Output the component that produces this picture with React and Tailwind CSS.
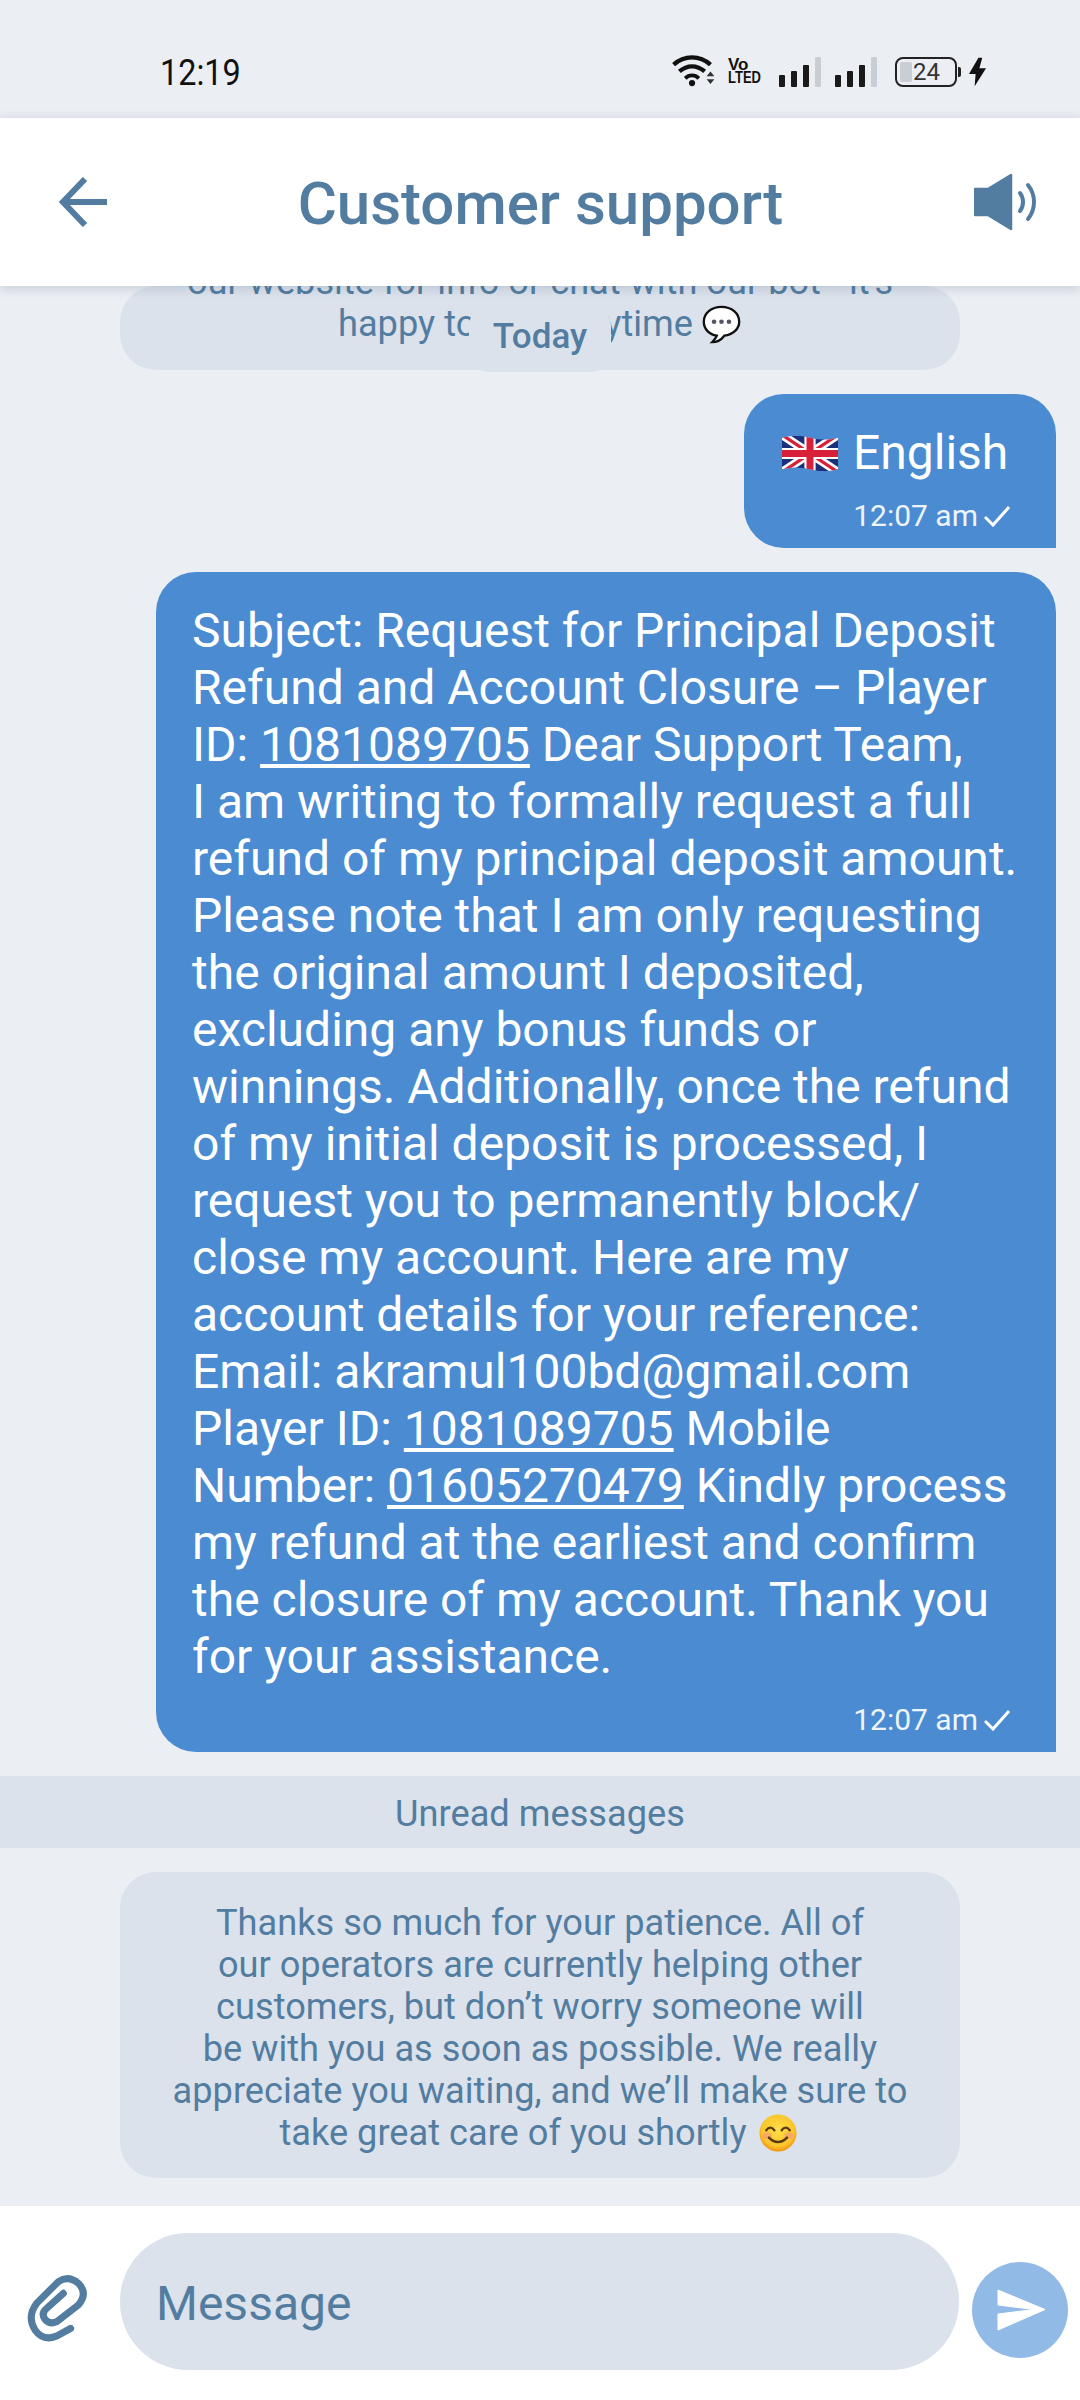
const ROBOTO = "font-['Roboto',sans-serif]";

function Flag({ className }) {
  return (
    <svg viewBox="0 0 60 40" className={className}>
      <clipPath id="f"><path d="M0 3 Q15 -1 30 3 T60 3 V37 Q45 41 30 37 T0 37Z" /></clipPath>
      <g clipPath="url(#f)">
        <rect width="60" height="40" fill="#1b2f7a" />
        <path d="M0 0L60 40M60 0L0 40" stroke="#fff" strokeWidth="9" />
        <path d="M0 0L60 40M60 0L0 40" stroke="#d8203a" strokeWidth="3.5" />
        <path d="M30 0V40M0 20H60" stroke="#fff" strokeWidth="12" />
        <path d="M30 0V40M0 20H60" stroke="#d8203a" strokeWidth="7.5" />
      </g>
    </svg>
  );
}

function Check() {
  return (
    <svg viewBox="0 0 26 22" className="w-[26px] h-[22px]" fill="none" stroke="#fff" strokeWidth="3">
      <path d="M1 12l8 8L25 2" />
    </svg>
  );
}

function Stamp() {
  return (
    <div className="flex items-center justify-end gap-[6px] pr-[2px] text-[30px] leading-[34px] text-[#eef4fb]">
      <span>12:07 am</span>
      <Check />
    </div>
  );
}

function Signal() {
  return (
    <div className="flex items-end gap-[6px] h-[30px]">
      <div className="w-[6px] h-[12px] rounded-[1px] bg-[#1a1a1a]" />
      <div className="w-[6px] h-[16px] rounded-[1px] bg-[#1a1a1a]" />
      <div className="w-[6px] h-[22px] rounded-[1px] bg-[#1a1a1a]" />
      <div className="w-[6px] h-[30px] rounded-[1px] bg-[#c9ced4]" />
    </div>
  );
}

function StatusBar() {
  return (
    <div className="h-[118px] flex items-start justify-between pl-[160px] pr-[93px] pt-[51px] bg-[#ebeef3]">
      <span className="text-[36px] leading-[44px] text-[#111] font-['Roboto',sans-serif] scale-x-[0.9] origin-left">12:19</span>
      <div className="flex items-end h-[32px] mt-[4px]">
        <svg viewBox="0 0 46 34" className="w-[46px] h-[33px]">
          <path d="M3 11C14 1 30 1 41 11" fill="none" stroke="#111" strokeWidth="4.5" />
          <path d="M9 18C17 11 27 11 35 18" fill="none" stroke="#111" strokeWidth="4.5" />
          <path d="M15 25C19 21 25 21 29 25" fill="none" stroke="#111" strokeWidth="4" />
          <circle cx="22" cy="30" r="3.2" fill="#111" />
          <path d="M37 23l4-5 4 5zM37 26l4 5 4-5z" fill="#333" />
        </svg>
        <div className="ml-[12px] w-[35px] text-[#111] font-['Liberation_Sans',sans-serif] font-bold">
          <div className="text-[17px] leading-[16px]">Vo</div>
          <div className="text-[13px] leading-[14px] scale-y-125 origin-bottom whitespace-nowrap">LTED</div>
        </div>
        <div className="ml-[16px]"><Signal /></div>
        <div className="ml-[14px]"><Signal /></div>
        <div className="ml-[18px] relative w-[62px] h-[30px] rounded-[8px] border-[2px] border-[#222] flex items-center overflow-hidden">
          <div className="absolute left-[3px] top-[3px] bottom-[3px] w-[12px] bg-[#c9ced4] rounded-[2px]" />
          <span className="relative ml-[16px] text-[24px] leading-[26px] text-[#333] font-['Roboto',sans-serif]">24</span>
        </div>
        <div className="w-[3px] h-[10px] bg-[#222] ml-[1px] mr-[7px] mb-[10px] rounded-r-[2px]" />
        <svg viewBox="0 0 20 30" className="w-[19px] h-[30px]">
          <path d="M11 0L1 17h7L7 30l12-19h-7l3-11z" fill="#111" />
        </svg>
      </div>
    </div>
  );
}

function Header() {
  return (
    <div className="relative z-10 h-[168px] bg-white flex items-center justify-between pl-[59px] pr-[42px] shadow-[0_2px_10px_rgba(60,80,110,0.22)]">
      <svg viewBox="0 0 48 50" className="w-[48px] h-[50px]" fill="none" stroke="#537da0" strokeWidth="6">
        <path d="M48 25H4M26 2L4 25l22 23" />
      </svg>
      <span className="text-[60px] leading-[64px] font-medium text-[#537da0] mt-[4px]">Customer support</span>
      <svg viewBox="0 0 64 58" className="w-[64px] h-[58px]" fill="#537da0" stroke="#537da0" strokeLinejoin="round" strokeLinecap="round">
        <path d="M1 16h13L37 2v54L14 42H1z" strokeWidth="2.5" />
        <path d="M46 20c4 5 4 13 0 18M54 12c8 10 8 24 0 34" fill="none" strokeWidth="4" />
      </svg>
    </div>
  );
}

function SystemBubble({ children, className = "" }) {
  return (
    <div className={`mx-[120px] w-[840px] rounded-[36px] bg-[#dbe2ec] text-[#537da0] text-center ${className}`}>
      {children}
    </div>
  );
}

function App() {
  return (
    <div className={`w-[1080px] h-[2400px] bg-[#ebeef3] flex flex-col overflow-hidden ${ROBOTO}`}>
      <StatusBar />
      <Header />
      <div className="relative flex-1 overflow-hidden flex flex-col">
        <SystemBubble className="h-[84px] text-[36.2px] leading-[42px]">
          <div className="-mt-[25px]">our website for info or chat with our bot - it's</div>
          <div className="flex items-center justify-center gap-[8px]">
            <span>happy to chat anytime</span>
            <svg viewBox="0 0 44 44" className="w-[41px] h-[41px]">
              <path d="M22 3C11 3 3 10 3 19c0 8 6 14 14 15-1 3-3 5-5 7 5 0 10-3 13-7 9-1 16-7 16-15C41 10 33 3 22 3z" fill="#fff" stroke="#111" strokeWidth="2.5" />
              <circle cx="14" cy="19" r="2.5" fill="#556" /><circle cx="22" cy="19" r="2.5" fill="#556" /><circle cx="30" cy="19" r="2.5" fill="#556" />
            </svg>
          </div>
        </SystemBubble>
        <div className="absolute left-[469px] top-[20px] w-[142px] h-[66px] pb-[3px] rounded-[20px] bg-[#dbe2ec] flex items-center justify-center text-[#537da0] font-medium text-[35px]">Today</div>

        <div className="mt-[24px] self-end mr-[24px] w-[312px] h-[154px] bg-[#4a8bd2] text-white rounded-[40px] rounded-br-none pt-[31px] pr-[44px] pl-[38px]">
          <div className="flex items-center gap-[15px] text-[48px] leading-[56px] whitespace-nowrap">
            <Flag className="w-[56px] h-[39px] shrink-0" />
            <span>English</span>
          </div>
          <div className="mt-[18px]"><Stamp /></div>
        </div>

        <div className="mt-[24px] self-end mr-[24px] w-[900px] h-[1180px] bg-[#4a8bd2] text-white rounded-[40px] rounded-br-none pt-[30px] pl-[36px] pr-[44px]">
          <div className="text-[48px] leading-[57px] whitespace-nowrap">
            <div>Subject: Request for Principal Deposit</div>
            <div>Refund and Account Closure – Player</div>
            <div>ID: <u>1081089705</u> Dear Support Team,</div>
            <div>I am writing to formally request a full</div>
            <div>refund of my principal deposit amount.</div>
            <div>Please note that I am only requesting</div>
            <div>the original amount I deposited,</div>
            <div>excluding any bonus funds or</div>
            <div>winnings. Additionally, once the refund</div>
            <div>of my initial deposit is processed, I</div>
            <div>request you to permanently block/</div>
            <div>close my account. Here are my</div>
            <div>account details for your reference:</div>
            <div>Email: akramul100bd@gmail.com</div>
            <div>Player ID: <u>1081089705</u> Mobile</div>
            <div>Number: <u>01605270479</u> Kindly process</div>
            <div>my refund at the earliest and confirm</div>
            <div>the closure of my account. Thank you</div>
            <div>for your assistance.</div>
          </div>
          <div className="mt-[18px]"><Stamp /></div>
        </div>

        <div className="mt-[24px] h-[72px] bg-[#dbe2ec] flex items-center justify-center pt-[5px] text-[36.2px] text-[#537da0]">Unread messages</div>

        <SystemBubble className="mt-[24px] h-[306px] pt-[30px] text-[36.2px] leading-[42px]">
          <div>Thanks so much for your patience. All of</div>
          <div>our operators are currently helping other</div>
          <div>customers, but don’t worry someone will</div>
          <div>be with you as soon as possible. We really</div>
          <div>appreciate you waiting, and we’ll make sure to</div>
          <div className="flex items-center justify-center gap-[12px] pr-[4px]">
            <span>take great care of you shortly</span>
            <svg viewBox="0 0 42 42" className="w-[38px] h-[38px]">
              <defs>
                <radialGradient id="sm" cx="50%" cy="42%" r="58%">
                  <stop offset="0%" stopColor="#fde047" />
                  <stop offset="75%" stopColor="#fbc52d" />
                  <stop offset="100%" stopColor="#f0920f" />
                </radialGradient>
              </defs>
              <circle cx="21" cy="21" r="20.5" fill="url(#sm)" />
              <ellipse cx="9" cy="24" rx="5" ry="3.5" fill="#f59a7a" opacity="0.7" />
              <ellipse cx="33" cy="24" rx="5" ry="3.5" fill="#f59a7a" opacity="0.7" />
              <path d="M8 18q4.500-6 9 0M25 18q4.500-6 9 0" fill="none" stroke="#5a3a14" strokeWidth="2.6" strokeLinecap="round" />
              <path d="M11 26q10 10 20 0" fill="none" stroke="#5a3a14" strokeWidth="2.8" strokeLinecap="round" />
            </svg>
          </div>
        </SystemBubble>
      </div>

      <div className="h-[194px] bg-white shrink-0 flex items-start pt-[27px]">
        <div className="w-[120px] h-[137px] relative">
          <svg viewBox="0 0 270 270" className="absolute left-[10px] top-[27px] w-[90px] h-[90px]" fill="none" stroke="#537da0" strokeWidth="21" strokeLinecap="round">
            <path d="M182 205L140 228Q100 245 75 210Q50 170 80 130L145 65Q175 45 205 70Q235 100 205 135L140 185Q120 195 105 178Q92 160 110 145L160 100" />
          </svg>
        </div>
        <div className="w-[839px] h-[137px] rounded-[68px] bg-[#dbe2ec] flex items-center pl-[36px] pt-[5px] text-[48px] text-[#537da0]">Message</div>
        <div className="ml-[13px] mt-[29px] w-[96px] h-[96px] rounded-full bg-[#92bae6] flex items-center justify-center">
          <svg viewBox="0 0 49 42" className="w-[49px] h-[42px] ml-[3px]">
            <path d="M1 1L48 20.500 1 41V25L37 20.500 1 16z" fill="#fff" stroke="#fff" strokeWidth="1" strokeLinejoin="round" />
          </svg>
        </div>
      </div>
    </div>
  );
}

export default App;
